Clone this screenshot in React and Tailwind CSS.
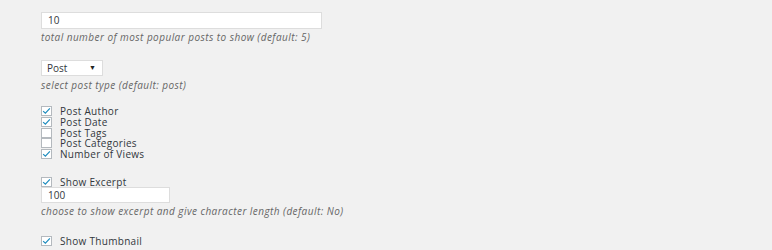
import React from "react";

const font = { fontFamily: '"Open Sans", "Noto Sans", sans-serif' };

function Check({ checked, label }) {
    return (
        <label className="flex items-center h-[10.7px] gap-[8px]">
            <span className="w-[11px] h-[10px] border border-[#b4b9be] bg-white flex items-center justify-center shrink-0">
                {checked && (
                    <svg viewBox="0 0 12 10" className="w-[10px] h-[8px]">
                        <path d="M1.5 5.2 4.5 8 10.5 1.5" fill="none" stroke="#1e8cbe" strokeWidth="1.6" />
                    </svg>
                )}
            </span>
            <span className="block text-[10px] leading-[10px] text-[#32373c] tracking-[0.3px]">{label}</span>
        </label>
    );
}

function Help({ children, className = "" }) {
    return (
        <p className={`text-[10px] leading-[12px] italic text-[#666] tracking-[0.45px] ${className}`}>{children}</p>
    );
}

export default function App() {
    return (
        <div className="w-[772px] h-[250px] bg-[#f1f1f1] overflow-hidden pl-[41px] pt-[12px]" style={font}>
            <div className="w-[281px] h-[17px] border border-[#dddddd] bg-white flex items-center pl-[6px] text-[10px] text-[#32373c]">
                10
            </div>
            <Help className="mt-[2px]">total number of most popular posts to show (default: 5)</Help>

            <div className="mt-[17px] w-[62px] h-[16px] border border-[#dddddd] bg-white flex items-center justify-between pl-[5px] pr-[6px] text-[10px] text-[#32373c]">
                <span>Post</span>
                <span className="text-[7px] text-[#222]">▼</span>
            </div>
            <Help className="mt-[3px]">select post type (default: post)</Help>

            <div className="mt-[15px] flex flex-col">
                <Check checked label="Post Author" />
                <Check checked label="Post Date" />
                <Check label="Post Tags" />
                <Check label="Post Categories" />
                <Check checked label="Number of Views" />
            </div>

            <div className="mt-[17px]">
                <Check checked label="Show Excerpt" />
            </div>
            <div className="w-[129px] h-[16px] border border-[#dddddd] bg-white flex items-center pl-[6px] text-[10px] text-[#32373c]">
                100
            </div>
            <Help className="mt-[2px]">choose to show excerpt and give character length (default: No)</Help>

            <div className="mt-[19px]">
                <Check checked label="Show Thumbnail" />
            </div>
        </div>
    );
}
